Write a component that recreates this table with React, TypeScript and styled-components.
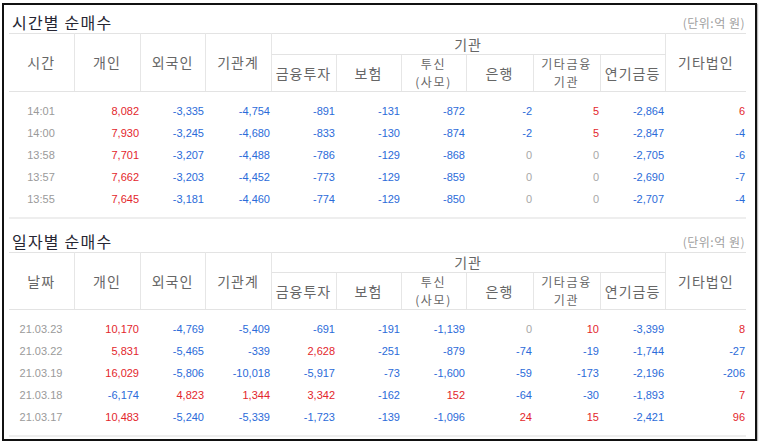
import React from "react";
import styled, { createGlobalStyle } from "styled-components";

const Global = createGlobalStyle`
  html, body { margin: 0; padding: 0; background: #fff; }
  body { font-family: "Noto Sans CJK KR", "Noto Sans", sans-serif; }
`;

const Frame = styled.div`
  margin: 3px 0 0 2px;
  width: 755px;
  box-sizing: border-box;
  border: 2px solid #111;
  box-shadow: 1px 1px 1px #bbb;
  padding: 0 13px 2px 5px;
  background: #fff;
`;

const Section = styled.section<{ $gap?: number }>`
  margin-top: ${(p) => p.$gap ?? 0}px;
`;

const SectionHead = styled.div<{ $h: number }>`
  height: ${(p) => p.$h}px;
  display: flex;
  justify-content: space-between;
  align-items: flex-end;
`;

const Title = styled.h2`
  margin: 0 0 0 3px;
  padding-bottom: 1px;
  font-size: 16px;
  line-height: 20px;
  font-weight: 400;
  color: #262633;
  letter-spacing: 1.2px;
`;

const Unit = styled.span`
  font-size: 12px;
  line-height: 16px;
  padding-bottom: 2px;
  margin-right: -3px;
  color: #a0a0a0;
  letter-spacing: 0.5px;
`;

const Table = styled.table`
  width: 737px;
  table-layout: fixed;
  border-collapse: collapse;
  border-top: 1px solid #e3e3e3;
  border-bottom: 2px solid #eeeeee;
`;

const Th = styled.th<{ $noRight?: boolean; $h?: number; $twoLine?: boolean }>`
  padding: 0;
  height: ${(p) => (p.$h ? `${p.$h}px` : "auto")};
  font-size: ${(p) => (p.$twoLine ? "12px" : "14px")};
  line-height: ${(p) => (p.$twoLine ? "18px" : "15px")};
  font-weight: 400;
  color: #666;
  text-align: center;
  vertical-align: middle;
  letter-spacing: ${(p) => (p.$twoLine ? "1.6px" : "1px")};
  border-right: ${(p) => (p.$noRight ? "none" : "1px solid #e6e6e6")};
  border-bottom: 1px solid #e3e3e3;
`;

const Td = styled.td<{ $tone: "pos" | "neg" | "zero" | "label"; $pad: "first" | "last" | "mid" }>`
  padding: ${(p) => (p.$pad === "first" ? "8px" : "0")} 1px
    ${(p) => (p.$pad === "last" ? "7px" : "0")} 0;
  height: 22px;
  box-sizing: content-box;
  font-family: "Liberation Sans", Arial, sans-serif;
  font-size: 11px;
  line-height: 22px;
  text-align: ${(p) => (p.$tone === "label" ? "center" : "right")};
  color: ${(p) =>
    p.$tone === "pos"
      ? "#e3262c"
      : p.$tone === "neg"
      ? "#2b6bd9"
      : p.$tone === "zero"
      ? "#a8a8a8"
      : "#9a9a9a"};
`;

const widths = [65, 66, 65, 66, 65, 65, 65, 67, 67, 65, 81];

type Row = [string, ...number[]];

const timeRows: Row[] = [
  ["14:01", 8082, -3335, -4754, -891, -131, -872, -2, 5, -2864, 6],
  ["14:00", 7930, -3245, -4680, -833, -130, -874, -2, 5, -2847, -4],
  ["13:58", 7701, -3207, -4488, -786, -129, -868, 0, 0, -2705, -6],
  ["13:57", 7662, -3203, -4452, -773, -129, -859, 0, 0, -2690, -7],
  ["13:55", 7645, -3181, -4460, -774, -129, -850, 0, 0, -2707, -4],
];

const dayRows: Row[] = [
  ["21.03.23", 10170, -4769, -5409, -691, -191, -1139, 0, 10, -3399, 8],
  ["21.03.22", 5831, -5465, -339, 2628, -251, -879, -74, -19, -1744, -27],
  ["21.03.19", 16029, -5806, -10018, -5917, -73, -1600, -59, -173, -2196, -206],
  ["21.03.18", -6174, 4823, 1344, 3342, -162, 152, -64, -30, -1893, 7],
  ["21.03.17", 10483, -5240, -5339, -1723, -139, -1096, 24, 15, -2421, 96],
];

const fmt = (n: number) => n.toLocaleString("en-US");

function FlowTable({
  label,
  rows,
  topH,
}: {
  label: string;
  rows: Row[];
  topH: number;
}) {
  return (
    <Table>
      <colgroup>
        {widths.map((w, i) => (
          <col key={i} style={{ width: w }} />
        ))}
      </colgroup>
      <thead>
        <tr>
          <Th rowSpan={2}>{label}</Th>
          <Th rowSpan={2}>개인</Th>
          <Th rowSpan={2}>외국인</Th>
          <Th rowSpan={2}>기관계</Th>
          <Th colSpan={6} $h={topH}>
            기관
          </Th>
          <Th rowSpan={2} $noRight>
            기타법인
          </Th>
        </tr>
        <tr>
          <Th $h={36}>금융투자</Th>
          <Th>보험</Th>
          <Th $twoLine>
            투신
            <br />
            (사모)
          </Th>
          <Th>은행</Th>
          <Th $twoLine>
            기타금융
            <br />
            기관
          </Th>
          <Th>연기금등</Th>
        </tr>
      </thead>
      <tbody>
        {rows.map((r, ri) => {
          const pad = ri === 0 ? "first" : ri === rows.length - 1 ? "last" : "mid";
          const [lab, ...nums] = r;
          return (
            <tr key={lab}>
              <Td $tone="label" $pad={pad}>
                {lab}
              </Td>
              {nums.map((n, ci) => (
                <Td key={ci} $tone={n > 0 ? "pos" : n < 0 ? "neg" : "zero"} $pad={pad}>
                  {fmt(n)}
                </Td>
              ))}
            </tr>
          );
        })}
      </tbody>
    </Table>
  );
}

export default function App() {
  return (
    <>
      <Global />
      <Frame>
        <Section>
          <SectionHead $h={28}>
            <Title>시간별 순매수</Title>
            <Unit>(단위:억 원)</Unit>
          </SectionHead>
          <FlowTable label="시간" rows={timeRows} topH={20} />
        </Section>
        <Section $gap={5}>
          <SectionHead $h={28}>
            <Title>일자별 순매수</Title>
            <Unit>(단위:억 원)</Unit>
          </SectionHead>
          <FlowTable label="날짜" rows={dayRows} topH={19} />
        </Section>
      </Frame>
    </>
  );
}
